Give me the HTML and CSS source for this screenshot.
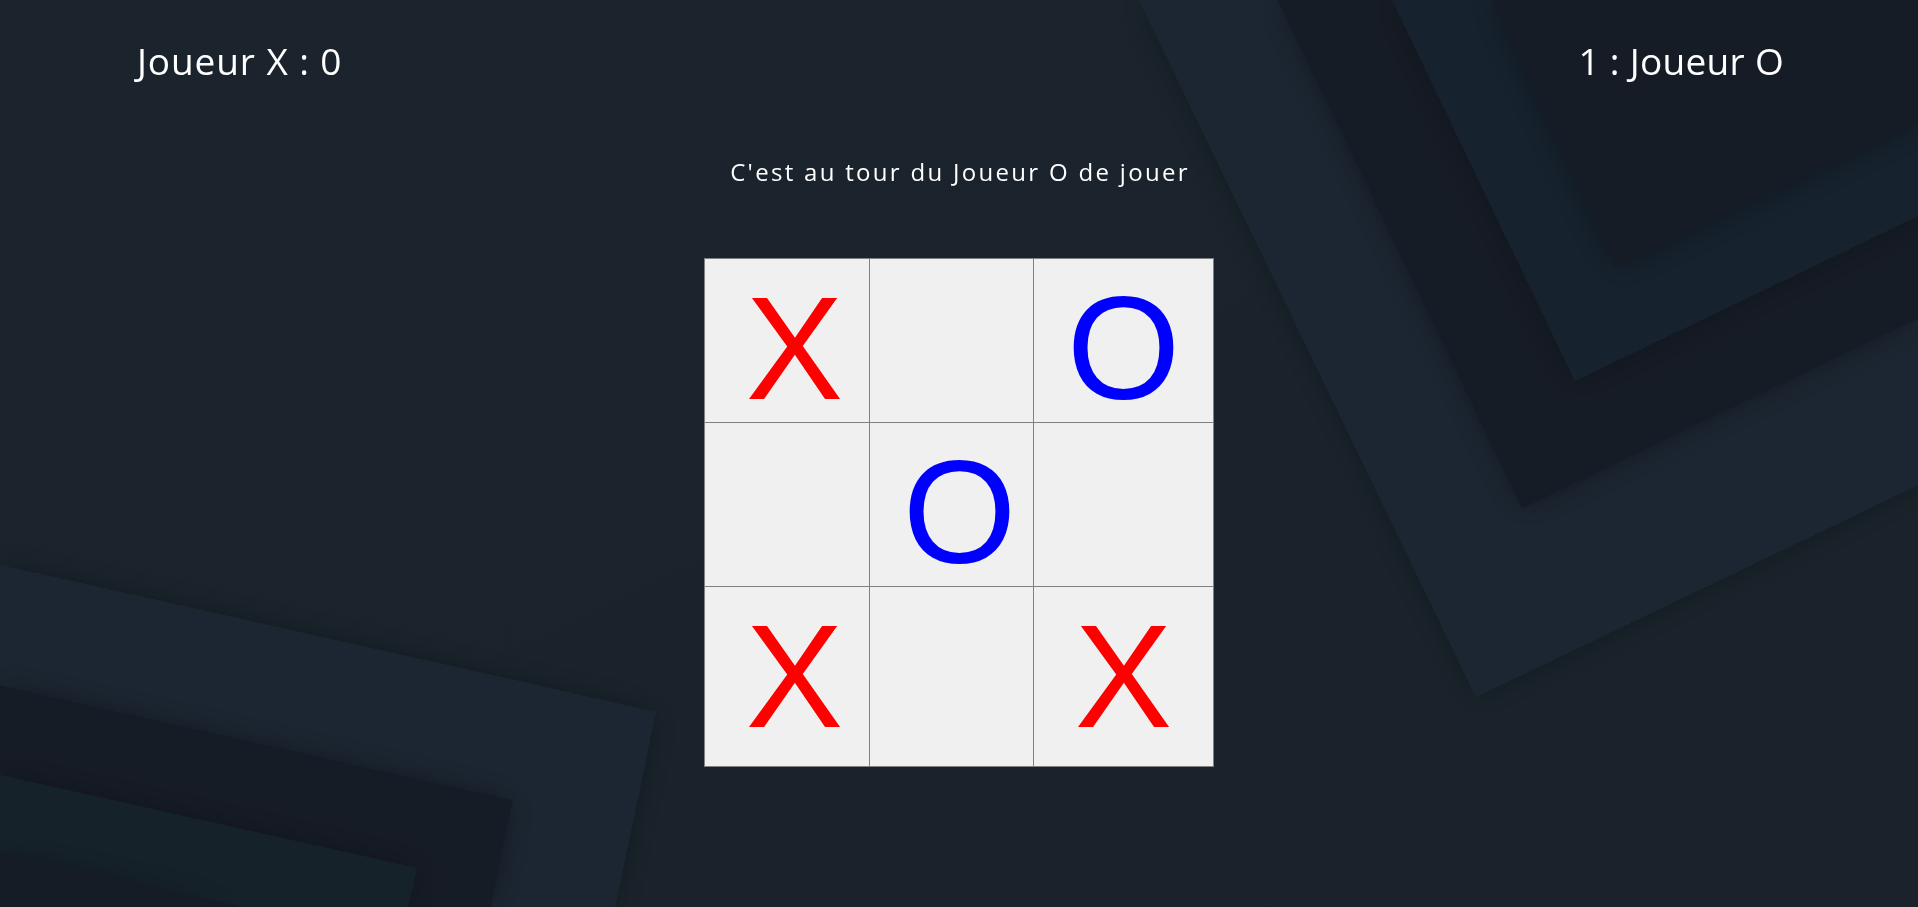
FILE: index.html
```html
<!DOCTYPE html>
<html lang="fr">
<head>
<meta charset="utf-8">
<title>Morpion</title>
<link rel="stylesheet" href="styles.css">
</head>
<body>
<div class="bg" aria-hidden="true">
  <svg viewBox="0 0 1918 907" preserveAspectRatio="none" xmlns="http://www.w3.org/2000/svg">
    <defs>
      <filter id="sh" x="-20%" y="-20%" width="140%" height="140%">
        <feDropShadow dx="0" dy="0" stdDeviation="16" flood-color="#0e1419" flood-opacity="0.3"/>
      </filter>
      <linearGradient id="g1" x1="0" y1="0" x2="1" y2="1">
        <stop offset="0" stop-color="#1b242d"/>
        <stop offset="1" stop-color="#1a232b"/>
      </linearGradient>
    </defs>
    <rect width="1918" height="907" fill="url(#g1)"/>
    <polygon points="1139,0 1476,697 1918,485 1918,0" fill="#1c2832" filter="url(#sh)"/>
    <polygon points="1277,0 1522,509 1918,319 1918,0" fill="#161f28" filter="url(#sh)"/>
    <polygon points="1392,0 1575,381 1918,216 1918,0" fill="#19232d" filter="url(#sh)"/>
    <polygon points="1491,0 1616,268 1918,123 1918,0" fill="#151c25" filter="url(#sh)"/>
    <polygon points="0,565 656,712 615,907 0,907" fill="#1c2832" filter="url(#sh)"/>
    <polygon points="0,685 513,800 491,907 0,907" fill="#171f28" filter="url(#sh)"/>
    <polygon points="0,775 417,868 408,907 0,907" fill="#18212b" filter="url(#sh)"/>
    <polygon points="0,852 245,907 0,907" fill="#151c25" filter="url(#sh)"/>
  </svg>
</div>
<main class="app">
  <header class="scores">
    <p class="score">Joueur X : 0</p>
    <p class="score score-right">1 : Joueur O</p>
  </header>
  <p class="status">C'est au tour du Joueur O de jouer</p>
  <div class="board">
    <div class="cell x">X</div>
    <div class="cell"></div>
    <div class="cell o">O</div>
    <div class="cell"></div>
    <div class="cell o">O</div>
    <div class="cell"></div>
    <div class="cell x">X</div>
    <div class="cell"></div>
    <div class="cell x">X</div>
  </div>
</main>
</body>
</html>
```
FILE: styles.css
```css
html, body {
  margin: 0;
  height: 100%;
}

body {
  background: #1a232b;
  overflow: hidden;
  font-family: "Open Sans", "Liberation Sans", sans-serif;
  color: #ffffff;
}

.bg {
  position: fixed;
  inset: 0;
  z-index: 0;
}

.bg svg {
  display: block;
  width: 100%;
  height: 100%;
}

.app {
  position: relative;
  z-index: 1;
  display: flex;
  flex-direction: column;
}

.scores {
  display: flex;
  justify-content: space-between;
  padding: 35px 134px 0 137px;
}

.score {
  margin: 0;
  font-size: 37px;
  letter-spacing: 0.9px;
  line-height: normal;
}

.score-right {
  letter-spacing: 0.3px;
}

.status {
  margin: 69px 0 0;
  padding-left: 2px;
  text-align: center;
  font-size: 24px;
  letter-spacing: 2.3px;
  line-height: normal;
}

.board {
  margin: 70px auto 0;
  display: grid;
  grid-template-columns: 165px 164px 181px;
  grid-template-rows: 164px 164px 181px;
}

.cell {
  box-sizing: border-box;
  width: 181px;
  height: 181px;
  border: 1px solid #808080;
  background: #f0f0f0;
  display: flex;
  align-items: center;
  justify-content: center;
  font-family: "Liberation Sans", Arial, sans-serif;
  font-size: 146px;
  line-height: normal;
}

.x {
  color: #ff0000;
}

.o {
  color: #0000ff;
}
```
